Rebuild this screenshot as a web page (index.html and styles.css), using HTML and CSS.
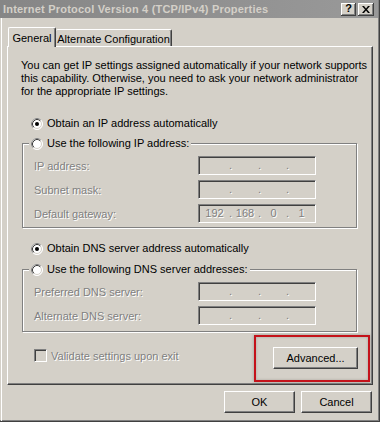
FILE: index.html
```html
<!DOCTYPE html>
<html>
<head>
<meta charset="utf-8">
<title>Internet Protocol Version 4 (TCP/IPv4) Properties</title>
<link rel="stylesheet" href="styles.css">
</head>
<body>
<div class="window">
  <div class="titlebar">
    <span class="title">Internet Protocol Version 4 (TCP/IPv4) Properties</span>
    <div class="tbtns">
      <span class="tbtn help">?</span>
      <span class="tbtn close"><svg width="8" height="7" viewBox="0 0 8 7"><path d="M0 0h2l2 2.5L6 0h2L5 3.5 8 7H6L4 4.5 2 7H0l3-3.5z" fill="#000"/></svg></span>
    </div>
  </div>
  <div class="content">
    <div class="tabs">
      <div class="tab active">General</div>
      <div class="tab alt">Alternate Configuration</div>
    </div>
    <div class="panel">
      <p class="intro">You can get IP settings assigned automatically if your network supports<br>this capability. Otherwise, you need to ask your network administrator<br>for the appropriate IP settings.</p>

      <div class="radio-row r-ip">
        <svg class="radio" width="12" height="12" viewBox="0 0 12 12"><circle cx="6" cy="6" r="5.5" fill="#fff" stroke="#fff"/><path d="M2.11 9.89A5.5 5.5 0 0 1 9.89 2.11" fill="none" stroke="#808080"/><circle cx="6" cy="6" r="4.5" fill="#fff" stroke="#d4d0c8"/><path d="M2.82 9.18A4.5 4.5 0 0 1 9.18 2.82" fill="none" stroke="#404040"/><circle cx="6" cy="6" r="2" fill="#000"/></svg>
        <span>Obtain an IP address automatically</span>
      </div>

      <fieldset class="group g-ip">
        <legend>
          <svg class="radio" width="12" height="12" viewBox="0 0 12 12"><circle cx="6" cy="6" r="5.5" fill="#fff" stroke="#fff"/><path d="M2.11 9.89A5.5 5.5 0 0 1 9.89 2.11" fill="none" stroke="#808080"/><circle cx="6" cy="6" r="4.5" fill="#fff" stroke="#d4d0c8"/><path d="M2.82 9.18A4.5 4.5 0 0 1 9.18 2.82" fill="none" stroke="#404040"/></svg>
          <span>Use the following IP address:</span>
        </legend>
        <div class="field">
          <span class="lbl">IP address:</span>
          <span class="ip"><span class="oct"></span><span class="dot">.</span><span class="oct"></span><span class="dot">.</span><span class="oct"></span><span class="dot">.</span><span class="oct"></span></span>
        </div>
        <div class="field">
          <span class="lbl">Subnet mask:</span>
          <span class="ip"><span class="oct"></span><span class="dot">.</span><span class="oct"></span><span class="dot">.</span><span class="oct"></span><span class="dot">.</span><span class="oct"></span></span>
        </div>
        <div class="field">
          <span class="lbl">Default gateway:</span>
          <span class="ip"><span class="oct">192</span><span class="dot">.</span><span class="oct">168</span><span class="dot">.</span><span class="oct">0</span><span class="dot">.</span><span class="oct">1</span></span>
        </div>
      </fieldset>

      <div class="radio-row r-dns">
        <svg class="radio" width="12" height="12" viewBox="0 0 12 12"><circle cx="6" cy="6" r="5.5" fill="#fff" stroke="#fff"/><path d="M2.11 9.89A5.5 5.5 0 0 1 9.89 2.11" fill="none" stroke="#808080"/><circle cx="6" cy="6" r="4.5" fill="#fff" stroke="#d4d0c8"/><path d="M2.82 9.18A4.5 4.5 0 0 1 9.18 2.82" fill="none" stroke="#404040"/><circle cx="6" cy="6" r="2" fill="#000"/></svg>
        <span>Obtain DNS server address automatically</span>
      </div>

      <fieldset class="group g-dns">
        <legend>
          <svg class="radio" width="12" height="12" viewBox="0 0 12 12"><circle cx="6" cy="6" r="5.5" fill="#fff" stroke="#fff"/><path d="M2.11 9.89A5.5 5.5 0 0 1 9.89 2.11" fill="none" stroke="#808080"/><circle cx="6" cy="6" r="4.5" fill="#fff" stroke="#d4d0c8"/><path d="M2.82 9.18A4.5 4.5 0 0 1 9.18 2.82" fill="none" stroke="#404040"/></svg>
          <span>Use the following DNS server addresses:</span>
        </legend>
        <div class="field">
          <span class="lbl">Preferred DNS server:</span>
          <span class="ip"><span class="oct"></span><span class="dot">.</span><span class="oct"></span><span class="dot">.</span><span class="oct"></span><span class="dot">.</span><span class="oct"></span></span>
        </div>
        <div class="field">
          <span class="lbl">Alternate DNS server:</span>
          <span class="ip"><span class="oct"></span><span class="dot">.</span><span class="oct"></span><span class="dot">.</span><span class="oct"></span><span class="dot">.</span><span class="oct"></span></span>
        </div>
      </fieldset>

      <div class="bottom-row">
        <div class="check-row">
          <span class="checkbox"></span>
          <span class="disabled">Validate settings upon exit</span>
        </div>
        <div class="adv-wrap">
          <button class="btn adv">Advanced...</button>
          <span class="highlight"></span>
        </div>
      </div>
    </div>
    <div class="actions">
      <button class="btn">OK</button>
      <button class="btn">Cancel</button>
    </div>
  </div>
</div>
</body>
</html>
```

FILE: styles.css
```css
* { box-sizing: border-box; }

html, body {
  margin: 0;
  padding: 0;
  background: #d4d0c8;
}

body {
  font-family: "Liberation Sans", Arial, sans-serif;
  font-size: 11px;
  color: #000;
}

.window {
  width: 380px;
  height: 422px;
  background: #d4d0c8;
  border-right: 1px solid #404040;
  border-bottom: 1px solid #404040;
  box-shadow: inset -1px -1px 0 #808080;
  display: flex;
  flex-direction: column;
  overflow: hidden;
}

.titlebar {
  height: 18px;
  margin-right: 1px;
  background: linear-gradient(to right, #868686, #999999);
  display: flex;
  align-items: center;
  justify-content: space-between;
  padding: 0 4px 0 3px;
}

.title {
  color: #d4d0c8;
  font-weight: bold;
  font-size: 11px;
  letter-spacing: 0.2px;
  white-space: nowrap;
}

.tbtns {
  display: flex;
  gap: 2px;
}

.tbtn {
  width: 15px;
  height: 13px;
  background: #d4d0c8;
  box-shadow: inset -1px -1px 0 #404040, inset 1px 1px 0 #fff, inset -2px -2px 0 #808080;
  display: flex;
  align-items: center;
  justify-content: center;
  font-weight: bold;
  font-size: 11px;
  line-height: 1;
}

.tbtn.help { padding-bottom: 1px; }
.tbtn.close { width: 16px; }

.content {
  flex: 1;
  margin-left: 1px;
  border-left: 1px solid #fff;
  padding-left: 5px;
  display: flex;
  flex-direction: column;
}

.tabs {
  display: flex;
  align-items: flex-end;
  height: 19px;
  margin-top: 9px;
  padding-left: 1px;
}

.tab {
  height: 17px;
  background: #d4d0c8;
  border-top: 1px solid #fff;
  border-left: 1px solid #fff;
  border-right: 1px solid #404040;
  box-shadow: inset -1px 0 0 #808080;
  border-radius: 2px 2px 0 0;
  display: flex;
  align-items: center;
  justify-content: center;
  padding-top: 1px;
  white-space: nowrap;
}

.tab.active {
  width: 48px;
  height: 20px;
  margin-bottom: -1px;
  position: relative;
  z-index: 1;
}

.tab.alt {
  width: 116px;
  border-left: none;
}

.panel {
  width: 366px;
  height: 339px;
  border-top: 1px solid #fff;
  border-left: 1px solid #fff;
  border-right: 1px solid #404040;
  border-bottom: 1px solid #404040;
  box-shadow: inset -1px -1px 0 #808080;
  padding: 12px 14px 0 13px;
  display: flex;
  flex-direction: column;
}

.intro {
  margin: 0;
  line-height: 13px;
  white-space: nowrap;
}

.radio-row {
  display: flex;
  align-items: center;
  gap: 4px;
  height: 13px;
  padding-left: 10px;
  line-height: 13px;
}

.r-ip { margin-top: 19px; }
.r-dns { margin-top: 14px; }

.radio { flex: none; display: block; }

.group {
  margin: 7px 0 0 1px;
  width: 335px;
  border: 1px solid #808080;
  box-shadow: 1px 1px 0 #fff, inset 1px 1px 0 #fff;
  padding: 6px 0 4px 11px;
  display: flex;
  flex-direction: column;
  gap: 5px;
}

.g-dns {
  margin-top: 8px;
  padding-bottom: 6px;
}

.group legend {
  display: flex;
  align-items: center;
  gap: 4px;
  height: 13px;
  line-height: 13px;
  margin-left: -5px;
  padding: 0 2px;
  background: #d4d0c8;
}

.field {
  display: flex;
  align-items: center;
  height: 19px;
}

.lbl {
  width: 164px;
  color: #808080;
  text-shadow: 1px 1px 0 #fff;
}

.ip {
  width: 118px;
  height: 19px;
  border: 1px solid;
  border-color: #808080 #fff #fff #808080;
  box-shadow: inset 1px 1px 0 #404040, inset -1px -1px 0 #d4d0c8;
  display: grid;
  grid-template-columns: 29px 3px 26px 3px 25px 3px 25px;
  align-items: center;
  padding-left: 1px;
  color: #808080;
  text-shadow: 1px 1px 0 #fff;
  line-height: 15px;
}

.oct { text-align: center; }
.dot { text-align: center; }

.bottom-row {
  display: flex;
  justify-content: space-between;
  align-items: flex-start;
  margin-top: 15px;
}

.check-row {
  display: flex;
  align-items: center;
  gap: 4px;
  margin-top: 2px;
  padding-left: 13px;
  height: 13px;
}

.checkbox {
  width: 13px;
  height: 13px;
  border: 1px solid;
  border-color: #808080 #fff #fff #808080;
  box-shadow: inset 1px 1px 0 #404040, inset -1px -1px 0 #d4d0c8;
  background: #d4d0c8;
}

.disabled {
  color: #808080;
  text-shadow: 1px 1px 0 #fff;
}

.adv-wrap {
  position: relative;
}

.btn {
  font-family: "Liberation Sans", Arial, sans-serif;
  font-size: 11px;
  color: #000;
  background: #d4d0c8;
  border: 1px solid;
  border-color: #fff #404040 #404040 #fff;
  box-shadow: inset -1px -1px 0 #808080;
  width: 71px;
  height: 22px;
  padding: 0;
  margin: 0;
  display: block;
}

.btn.adv { width: 85px; }

.highlight {
  position: absolute;
  left: -19px;
  top: -12px;
  width: 116px;
  height: 47px;
  border: 2px solid #c4121a;
  box-shadow: 0 0 3px rgba(0, 0, 0, 0.25), inset 0 0 3px rgba(0, 0, 0, 0.2);
  pointer-events: none;
}

.actions {
  display: flex;
  justify-content: flex-end;
  gap: 6px;
  margin-top: 6px;
  padding-right: 7px;
}
```
